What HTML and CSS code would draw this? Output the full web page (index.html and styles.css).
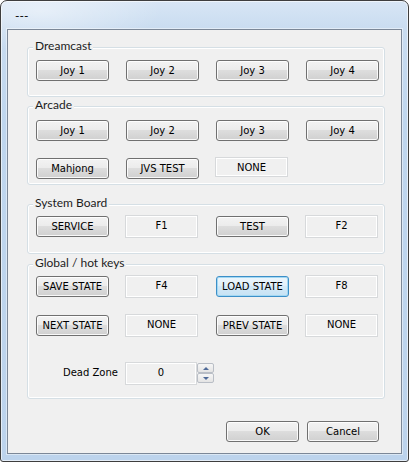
FILE: index.html
```html
<!DOCTYPE html>
<html>
<head>
<meta charset="utf-8">
<title>---</title>
<link rel="stylesheet" href="styles.css">
</head>
<body>
<div class="window">
  <div class="titlebar"><span class="title">---</span></div>
  <div class="client">
    <section class="group group-dc">
      <span class="group-label">Dreamcast</span>
      <div class="grid">
        <button class="btn">Joy 1</button>
        <button class="btn">Joy 2</button>
        <button class="btn">Joy 3</button>
        <button class="btn">Joy 4</button>
      </div>
    </section>
    <section class="group group-arcade">
      <span class="group-label">Arcade</span>
      <div class="grid grid-arcade">
        <button class="btn">Joy 1</button>
        <button class="btn">Joy 2</button>
        <button class="btn">Joy 3</button>
        <button class="btn">Joy 4</button>
        <button class="btn">Mahjong</button>
        <button class="btn">JVS TEST</button>
        <div class="field field-sm">NONE</div>
      </div>
    </section>
    <section class="group group-sys">
      <span class="group-label">System Board</span>
      <div class="grid">
        <button class="btn">SERVICE</button>
        <div class="field">F1</div>
        <button class="btn">TEST</button>
        <div class="field">F2</div>
      </div>
    </section>
    <section class="group group-global">
      <span class="group-label">Global / hot keys</span>
      <div class="grid grid-global">
        <button class="btn">SAVE STATE</button>
        <div class="field">F4</div>
        <button class="btn btn-focus">LOAD STATE</button>
        <div class="field">F8</div>
        <button class="btn">NEXT STATE</button>
        <div class="field">NONE</div>
        <button class="btn">PREV STATE</button>
        <div class="field">NONE</div>
      </div>
      <div class="dz-row">
        <span class="dz-label">Dead Zone</span>
        <div class="field field-dz">0</div>
        <div class="spinner">
          <div class="spin spin-up"><span class="arrow arrow-up"></span></div>
          <div class="spin spin-down"><span class="arrow arrow-down"></span></div>
        </div>
      </div>
    </section>
    <div class="footer">
      <button class="btn btn-ok">OK</button>
      <button class="btn btn-cancel">Cancel</button>
    </div>
  </div>
</div>
</body>
</html>
```

FILE: styles.css
```css
* {
  box-sizing: border-box;
}

html, body {
  margin: 0;
  padding: 0;
}

body {
  width: 409px;
  height: 462px;
  overflow: hidden;
  background: #ffffff;
}

.window {
  width: 409px;
  height: 462px;
  border: 1px solid #3e3e3e;
  border-radius: 7px 7px 3px 3px;
  background:
    radial-gradient(ellipse 120px 40px at 40px 10px, rgba(255,255,255,0.45), rgba(255,255,255,0) 100%),
    linear-gradient(180deg, #d8e6f5 0px, #c9dcf0 28px, #bfd6ee 120px, #bcd3ec 100%);
  box-shadow: inset 0 0 0 1px rgba(255,255,255,0.6);
  padding: 0 6px 7px 6px;
  display: flex;
  flex-direction: column;
}

.titlebar {
  height: 28px;
  display: flex;
  align-items: center;
  padding-left: 8px;
  font-family: Lato, "Open Sans", sans-serif;
  font-size: 12px;
  color: #000;
}

.client {
  flex: 1;
  border: 1px solid #7b8797;
  box-shadow: 0 0 0 1px rgba(255,255,255,0.45);
  background: #f0f0f0;
  padding: 17px 0 0 19px;
  display: flex;
  flex-direction: column;
}

.group {
  position: relative;
  width: 358px;
  border: 1px solid #d5dfe5;
  border-radius: 3px;
  box-shadow: inset 0 0 0 1px #ffffff;
  padding-left: 8px;
}

.group-label {
  position: absolute;
  top: -10px;
  left: 5px;
  padding: 0 2px;
  background: #f0f0f0;
  font-family: Lato, "Open Sans", sans-serif;
  font-size: 12px;
  line-height: 16px;
  color: #1c1c1c;
  white-space: nowrap;
}

.group-dc {
  padding-top: 12px;
  padding-bottom: 15px;
}

.group-arcade {
  margin-top: 9px;
  padding-top: 13px;
  padding-bottom: 5px;
}

.group-sys {
  margin-top: 19px;
  padding-top: 11px;
  padding-bottom: 16px;
}

.group-global {
  margin-top: 10px;
  padding-top: 11px;
  padding-bottom: 13px;
}

.grid {
  display: grid;
  grid-template-columns: repeat(4, 73px);
  column-gap: 17px;
  grid-auto-rows: 21px;
}

.grid-arcade {
  row-gap: 17px;
}

.grid-global {
  row-gap: 18px;
}

.btn {
  width: 73px;
  height: 21px;
  margin: 0;
  padding: 0;
  font-family: "DejaVu Sans", Verdana, sans-serif;
  font-size: 10px;
  color: #000;
  border: 1px solid #707070;
  border-radius: 3px;
  background: linear-gradient(180deg, #f3f3f3 0%, #ececec 45%, #dddddd 50%, #d0d0d0 100%);
  box-shadow: inset 0 0 0 1px rgba(255,255,255,0.85);
  white-space: nowrap;
}

.btn-focus {
  border-color: #3c8fc8;
  background: linear-gradient(180deg, #edf6fc 0%, #e1f0fa 45%, #d3e9f7 50%, #c6e2f4 100%);
  box-shadow: inset 0 0 0 1px #a3d8f3;
}

.field {
  width: 73px;
  height: 23px;
  margin: -1px 0 -1px -1px;
  border: 1px solid #d7d9db;
  background: #f0f0f0;
  box-shadow: inset 0 0 0 1px #ffffff;
  display: flex;
  align-items: center;
  justify-content: center;
  padding-bottom: 2px;
  font-family: "DejaVu Sans", Verdana, sans-serif;
  font-size: 10px;
  color: #000;
}

.field-sm {
  height: 20px;
  margin: -1px 0 0 -1px;
  padding-bottom: 0;
}

.dz-row {
  display: flex;
  align-items: flex-start;
  margin-top: 26px;
  height: 23px;
}

.dz-label {
  width: 89px;
  padding-left: 27px;
  line-height: 21px;
  font-family: "DejaVu Sans", Verdana, sans-serif;
  font-size: 10px;
  color: #000;
}

.field-dz {
  width: 72px;
  margin: 0;
}

.spinner {
  width: 17px;
  height: 20px;
  margin-top: 1px;
  display: flex;
  flex-direction: column;
}

.spin {
  height: 10px;
  border: 1px solid #b9bec6;
  border-radius: 2px;
  background: linear-gradient(180deg, #f6f6f6, #e4e4e4);
  display: flex;
  align-items: center;
  justify-content: center;
}

.arrow {
  width: 0;
  height: 0;
  border-left: 3px solid transparent;
  border-right: 3px solid transparent;
}

.arrow-up {
  border-bottom: 3px solid #4f6a98;
}

.arrow-down {
  border-top: 3px solid #4f6a98;
}

.footer {
  display: flex;
  justify-content: flex-end;
  gap: 8px;
  margin-top: 22px;
  padding-right: 22px;
}

.btn-cancel {
  width: 72px;
}
```
